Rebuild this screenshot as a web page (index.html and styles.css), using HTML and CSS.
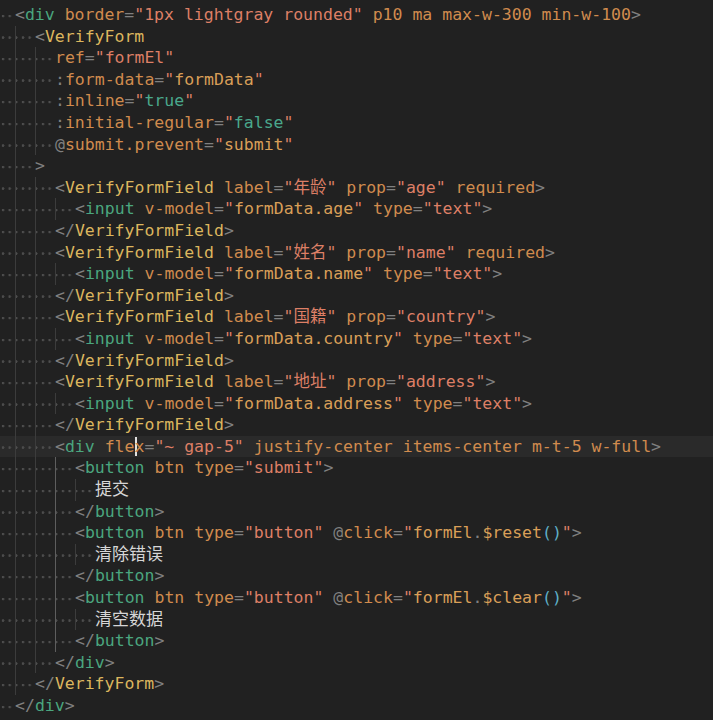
FILE: index.html
```html
<!DOCTYPE html>
<html>
<head>
<meta charset="utf-8">
<link rel="stylesheet" href="styles.css">
</head>
<body>
<div class="editor">
<div class="ln"><span class="ws l0"></span><i class="p">&lt;</i><i class="t">div</i> <i class="a">border</i><i class="p">=</i><i class="s">"1px lightgray rounded"</i> <i class="a">p10</i> <i class="a">ma</i> <i class="a">max-w-300</i> <i class="a">min-w-100</i><i class="p">&gt;</i></div>
<div class="ln"><span class="ws l1"></span><i class="p">&lt;</i><i class="c">VerifyForm</i></div>
<div class="ln"><span class="ws l2"></span><i class="a">ref</i><i class="p">=</i><i class="s">"formEl"</i></div>
<div class="ln"><span class="ws l2"></span><i class="p">:</i><i class="a">form-data</i><i class="p">=</i><i class="s">"</i><i class="v">formData</i><i class="s">"</i></div>
<div class="ln"><span class="ws l2"></span><i class="p">:</i><i class="a">inline</i><i class="p">=</i><i class="s">"</i><i class="b">true</i><i class="s">"</i></div>
<div class="ln"><span class="ws l2"></span><i class="p">:</i><i class="a">initial-regular</i><i class="p">=</i><i class="s">"</i><i class="b">false</i><i class="s">"</i></div>
<div class="ln"><span class="ws l2"></span><i class="p">@</i><i class="a">submit.prevent</i><i class="p">=</i><i class="s">"</i><i class="v">submit</i><i class="s">"</i></div>
<div class="ln"><span class="ws l1"></span><i class="p">&gt;</i></div>
<div class="ln"><span class="ws l2"></span><i class="p">&lt;</i><i class="c">VerifyFormField</i> <i class="a">label</i><i class="p">=</i><i class="s">"年龄"</i> <i class="a">prop</i><i class="p">=</i><i class="s">"age"</i> <i class="a">required</i><i class="p">&gt;</i></div>
<div class="ln"><span class="ws l3"></span><i class="p">&lt;</i><i class="t">input</i> <i class="a">v-model</i><i class="p">=</i><i class="s">"</i><i class="v">formData.age</i><i class="s">"</i> <i class="a">type</i><i class="p">=</i><i class="s">"text"</i><i class="p">&gt;</i></div>
<div class="ln"><span class="ws l2"></span><i class="p">&lt;/</i><i class="c">VerifyFormField</i><i class="p">&gt;</i></div>
<div class="ln"><span class="ws l2"></span><i class="p">&lt;</i><i class="c">VerifyFormField</i> <i class="a">label</i><i class="p">=</i><i class="s">"姓名"</i> <i class="a">prop</i><i class="p">=</i><i class="s">"name"</i> <i class="a">required</i><i class="p">&gt;</i></div>
<div class="ln"><span class="ws l3"></span><i class="p">&lt;</i><i class="t">input</i> <i class="a">v-model</i><i class="p">=</i><i class="s">"</i><i class="v">formData.name</i><i class="s">"</i> <i class="a">type</i><i class="p">=</i><i class="s">"text"</i><i class="p">&gt;</i></div>
<div class="ln"><span class="ws l2"></span><i class="p">&lt;/</i><i class="c">VerifyFormField</i><i class="p">&gt;</i></div>
<div class="ln"><span class="ws l2"></span><i class="p">&lt;</i><i class="c">VerifyFormField</i> <i class="a">label</i><i class="p">=</i><i class="s">"国籍"</i> <i class="a">prop</i><i class="p">=</i><i class="s">"country"</i><i class="p">&gt;</i></div>
<div class="ln"><span class="ws l3"></span><i class="p">&lt;</i><i class="t">input</i> <i class="a">v-model</i><i class="p">=</i><i class="s">"</i><i class="v">formData.country</i><i class="s">"</i> <i class="a">type</i><i class="p">=</i><i class="s">"text"</i><i class="p">&gt;</i></div>
<div class="ln"><span class="ws l2"></span><i class="p">&lt;/</i><i class="c">VerifyFormField</i><i class="p">&gt;</i></div>
<div class="ln"><span class="ws l2"></span><i class="p">&lt;</i><i class="c">VerifyFormField</i> <i class="a">label</i><i class="p">=</i><i class="s">"地址"</i> <i class="a">prop</i><i class="p">=</i><i class="s">"address"</i><i class="p">&gt;</i></div>
<div class="ln"><span class="ws l3"></span><i class="p">&lt;</i><i class="t">input</i> <i class="a">v-model</i><i class="p">=</i><i class="s">"</i><i class="v">formData.address</i><i class="s">"</i> <i class="a">type</i><i class="p">=</i><i class="s">"text"</i><i class="p">&gt;</i></div>
<div class="ln"><span class="ws l2"></span><i class="p">&lt;/</i><i class="c">VerifyFormField</i><i class="p">&gt;</i></div>
<div class="ln cur"><span class="ws l2"></span><i class="p">&lt;</i><i class="t">div</i> <i class="a">fle</i><span class="caret"></span><i class="a">x</i><i class="p">=</i><i class="s">"~ gap-5"</i> <i class="a">justify-center</i> <i class="a">items-center</i> <i class="a">m-t-5</i> <i class="a">w-full</i><i class="p">&gt;</i></div>
<div class="ln"><span class="ws l3 act"></span><i class="p">&lt;</i><i class="t">button</i> <i class="a">btn</i> <i class="a">type</i><i class="p">=</i><i class="s">"submit"</i><i class="p">&gt;</i></div>
<div class="ln"><span class="ws l4 act"></span><i class="x">提交</i></div>
<div class="ln"><span class="ws l3 act"></span><i class="p">&lt;/</i><i class="t">button</i><i class="p">&gt;</i></div>
<div class="ln"><span class="ws l3 act"></span><i class="p">&lt;</i><i class="t">button</i> <i class="a">btn</i> <i class="a">type</i><i class="p">=</i><i class="s">"button"</i> <i class="p">@</i><i class="a">click</i><i class="p">=</i><i class="s">"</i><i class="v">formEl</i><i class="p">.</i><i class="v">$reset</i><i class="f">()</i><i class="s">"</i><i class="p">&gt;</i></div>
<div class="ln"><span class="ws l4 act"></span><i class="x">清除错误</i></div>
<div class="ln"><span class="ws l3 act"></span><i class="p">&lt;/</i><i class="t">button</i><i class="p">&gt;</i></div>
<div class="ln"><span class="ws l3 act"></span><i class="p">&lt;</i><i class="t">button</i> <i class="a">btn</i> <i class="a">type</i><i class="p">=</i><i class="s">"button"</i> <i class="p">@</i><i class="a">click</i><i class="p">=</i><i class="s">"</i><i class="v">formEl</i><i class="p">.</i><i class="v">$clear</i><i class="f">()</i><i class="s">"</i><i class="p">&gt;</i></div>
<div class="ln"><span class="ws l4 act"></span><i class="x">清空数据</i></div>
<div class="ln"><span class="ws l3 act"></span><i class="p">&lt;/</i><i class="t">button</i><i class="p">&gt;</i></div>
<div class="ln"><span class="ws l2"></span><i class="p">&lt;/</i><i class="t">div</i><i class="p">&gt;</i></div>
<div class="ln"><span class="ws l1"></span><i class="p">&lt;/</i><i class="c">VerifyForm</i><i class="p">&gt;</i></div>
<div class="ln"><span class="ws l0"></span><i class="p">&lt;/</i><i class="t">div</i><i class="p">&gt;</i></div>
</div>
</body>
</html>
```
FILE: styles.css
```css
html, body {
  margin: 0;
  padding: 0;
  background: #212121;
}
.editor {
  padding-top: 4px;
  font-family: "DejaVu Sans Mono", "Noto Sans CJK SC", monospace;
  font-size: 16.5px;
  color: #d4d4d4;
}
.ln {
  height: 21.6px;
  line-height: 21.6px;
  white-space: pre;
}
.ln i { font-style: normal; }
.cur { background: #2a2a2a; }
.ws {
  display: inline-block;
  height: 21.6px;
  vertical-align: top;
  --dots: radial-gradient(circle at 3px 55%, #4e4e4e 0, #4e4e4e 1px, transparent 1.6px);
  --g: linear-gradient(#3c3c3c, #3c3c3c);
  --ga: linear-gradient(#5e5e5e, #5e5e5e);
}
.l0 {
  width: 15px;
  background-image: var(--dots);
  background-size: 6.667px 100%;
  background-repeat: repeat-x;
}
.l1 {
  width: 35px;
  background-image: var(--g), var(--dots);
  background-size: 1px 100%, 6.667px 100%;
  background-position: 15px 0, 0 0;
  background-repeat: no-repeat, repeat-x;
}
.l2 {
  width: 55px;
  background-image: var(--g), var(--g), var(--dots);
  background-size: 1px 100%, 1px 100%, 6.667px 100%;
  background-position: 15px 0, 35px 0, 0 0;
  background-repeat: no-repeat, no-repeat, repeat-x;
}
.l3 {
  width: 75px;
  background-image: var(--g), var(--g), var(--g), var(--dots);
  background-size: 1px 100%, 1px 100%, 1px 100%, 6.667px 100%;
  background-position: 15px 0, 35px 0, 55px 0, 0 0;
  background-repeat: no-repeat, no-repeat, no-repeat, repeat-x;
}
.l4 {
  width: 95px;
  background-image: var(--g), var(--g), var(--g), var(--g), var(--dots);
  background-size: 1px 100%, 1px 100%, 1px 100%, 1px 100%, 6.667px 100%;
  background-position: 15px 0, 35px 0, 55px 0, 75px 0, 0 0;
  background-repeat: no-repeat, no-repeat, no-repeat, no-repeat, repeat-x;
}
.l3.act {
  background-image: var(--g), var(--g), var(--ga), var(--dots);
}
.l4.act {
  background-image: var(--g), var(--g), var(--ga), var(--g), var(--dots);
}
.p { color: #808080; }
.t { color: #4ba67f; }
.c { color: #dcb65e; }
.a { color: #d08b4e; }
.s { color: #dd7f66; }
.b { color: #4aa88c; }
.v { color: #d99f58; }
.f { color: #5fb0c8; }
.x { color: #d6d6d6; font-size: 17px; }
.caret {
  display: inline-block;
  width: 0;
  height: 19px;
  vertical-align: top;
  margin-top: 1px;
  border-left: 2px solid #e0e0e0;
  margin-right: -2px;
}
```
